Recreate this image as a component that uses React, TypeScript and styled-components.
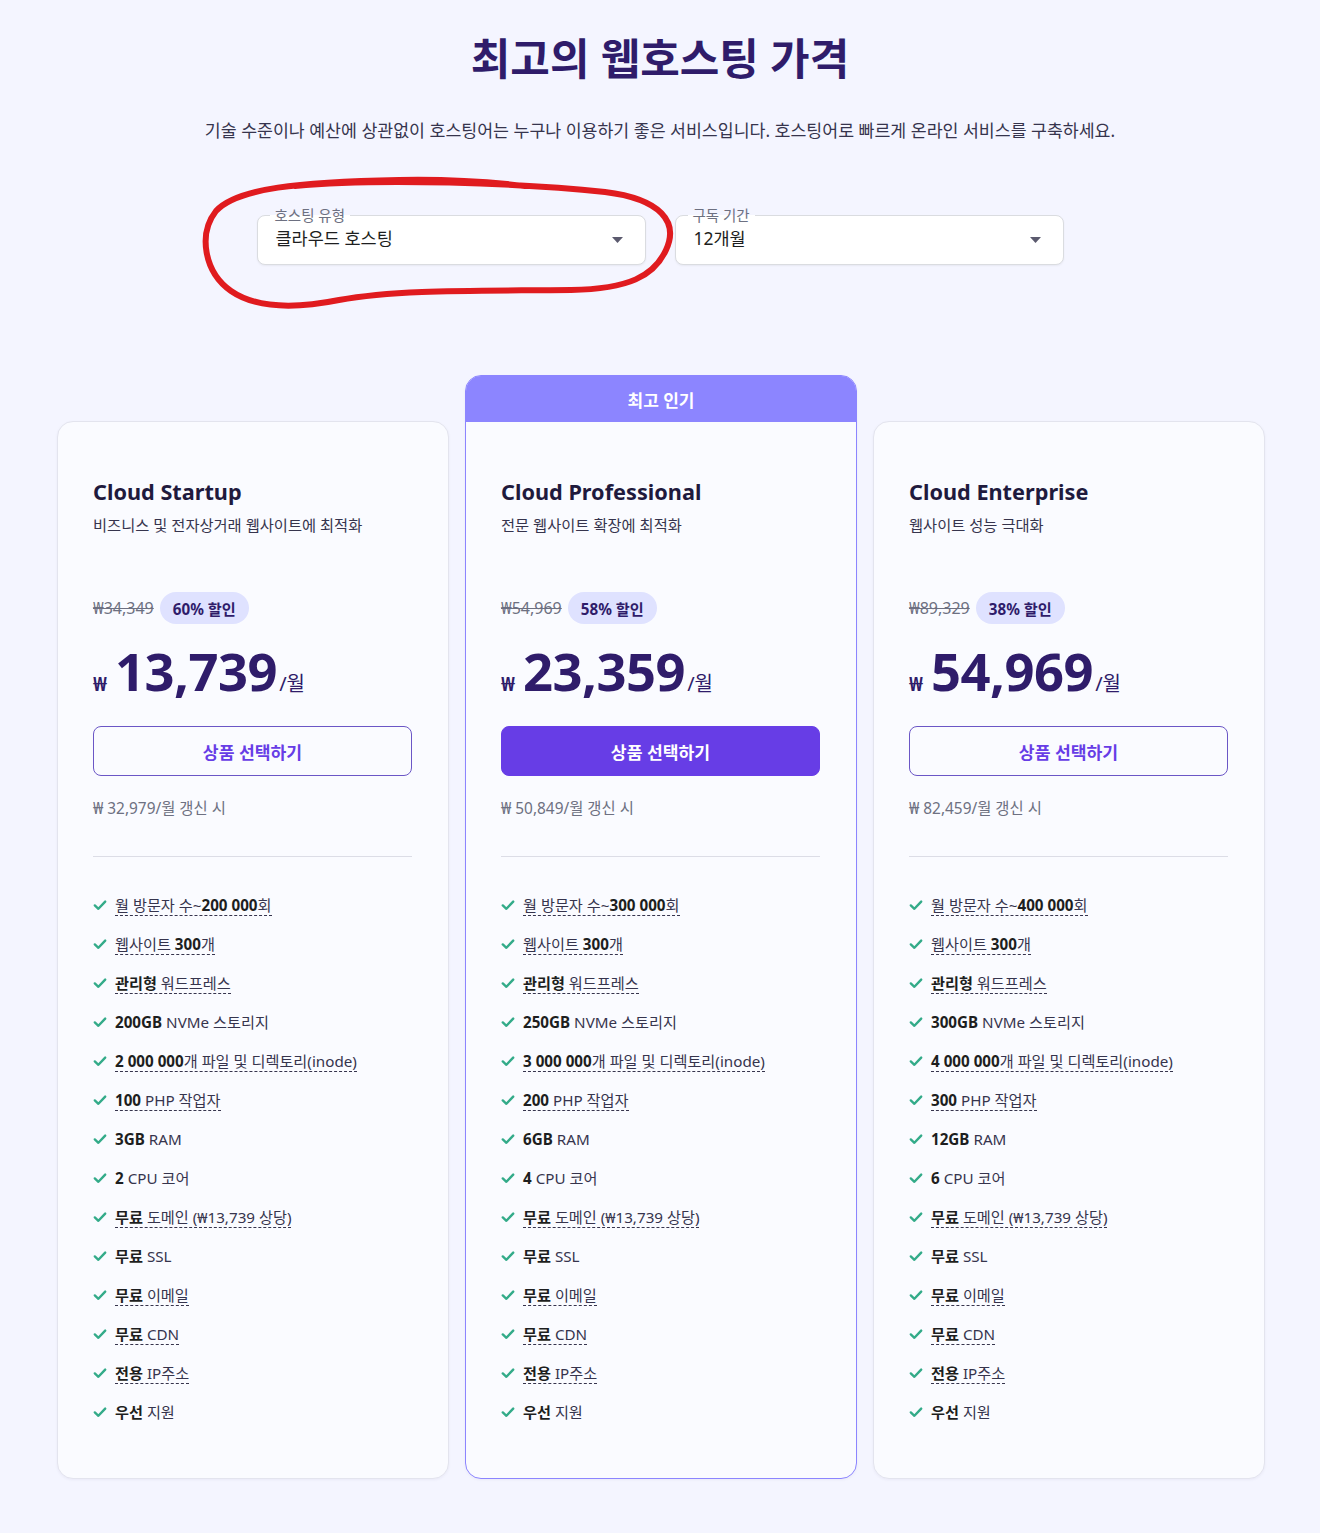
import React from "react";
import styled, { createGlobalStyle } from "styled-components";

type Feature = {
  pre?: string;
  bold: string;
  post?: string;
  dashed?: boolean;
};

type Plan = {
  name: string;
  desc: string;
  oldPrice: string;
  discount: string;
  price: string;
  renew: string;
  featured?: boolean;
  features: Feature[];
};

const makeFeatures = (
  visitors: string,
  storage: string,
  inodes: string,
  php: string,
  ram: string,
  cpu: string
): Feature[] => [
  { pre: "월 방문자 수~", bold: visitors, post: "회", dashed: true },
  { pre: "웹사이트 ", bold: "300", post: "개", dashed: true },
  { bold: "관리형", post: " 워드프레스", dashed: true },
  { bold: storage, post: " NVMe 스토리지" },
  { bold: inodes, post: "개 파일 및 디렉토리(inode)", dashed: true },
  { bold: php, post: " PHP 작업자", dashed: true },
  { bold: ram, post: " RAM" },
  { bold: cpu, post: " CPU 코어" },
  { bold: "무료", post: " 도메인 (₩13,739 상당)", dashed: true },
  { bold: "무료", post: " SSL" },
  { bold: "무료", post: " 이메일", dashed: true },
  { bold: "무료", post: " CDN", dashed: true },
  { bold: "전용", post: " IP주소", dashed: true },
  { bold: "우선", post: " 지원" },
];

const plans: Plan[] = [
  {
    name: "Cloud Startup",
    desc: "비즈니스 및 전자상거래 웹사이트에 최적화",
    oldPrice: "₩34,349",
    discount: "60% 할인",
    price: "13,739",
    renew: "₩ 32,979/월 갱신 시",
    features: makeFeatures("200 000", "200GB", "2 000 000", "100", "3GB", "2"),
  },
  {
    name: "Cloud Professional",
    desc: "전문 웹사이트 확장에 최적화",
    oldPrice: "₩54,969",
    discount: "58% 할인",
    price: "23,359",
    renew: "₩ 50,849/월 갱신 시",
    featured: true,
    features: makeFeatures("300 000", "250GB", "3 000 000", "200", "6GB", "4"),
  },
  {
    name: "Cloud Enterprise",
    desc: "웹사이트 성능 극대화",
    oldPrice: "₩89,329",
    discount: "38% 할인",
    price: "54,969",
    renew: "₩ 82,459/월 갱신 시",
    features: makeFeatures("400 000", "300GB", "4 000 000", "300", "12GB", "6"),
  },
];

const Caret = () => (
  <svg width="11" height="6" viewBox="0 0 11 6">
    <path d="M0 0 L11 0 L5.5 6 Z" fill="#5b5a6e" />
  </svg>
);

const Check = () => (
  <svg width="14" height="14" viewBox="0 0 14 14">
    <path
      d="M1.8 7.4 L5.4 10.8 L12.2 3.6"
      fill="none"
      stroke="#33ab89"
      strokeWidth="2.4"
      strokeLinecap="round"
      strokeLinejoin="round"
    />
  </svg>
);

export default function App() {
  return (
    <>
      <GlobalStyle />
      <Page>
        <Title>최고의 웹호스팅 가격</Title>
        <Subtitle>
          기술 수준이나 예산에 상관없이 호스팅어는 누구나 이용하기 좋은
          서비스입니다. 호스팅어로 빠르게 온라인 서비스를 구축하세요.
        </Subtitle>

        <Filters>
          <SelectBox>
            <FloatLabel>호스팅 유형</FloatLabel>
            <SelectValue>클라우드 호스팅</SelectValue>
            <Caret />
          </SelectBox>
          <SelectBox>
            <FloatLabel>구독 기간</FloatLabel>
            <SelectValue>12개월</SelectValue>
            <Caret />
          </SelectBox>
          <Annotation viewBox="198 175 500 150" width="500" height="150">
            <path
              d="M 296 186 C 380 178, 520 183, 606 192 C 662 199, 680 222, 667 250 C 655 276, 630 289, 572 290 C 480 291, 400 289, 340 300 C 300 308, 258 309, 232 291 C 205 272, 199 234, 217 211 C 238 188, 300 182, 400 180 C 452 179, 492 182, 526 186"
              fill="none"
              stroke="#e01b1f"
              strokeWidth="6"
              strokeLinecap="round"
              strokeLinejoin="round"
            />
          </Annotation>
        </Filters>

        <Plans>
          {plans.map((plan) => (
            <Card key={plan.name} $featured={plan.featured}>
              {plan.featured && <Ribbon>최고 인기</Ribbon>}
              <CardBody>
                <PlanName>{plan.name}</PlanName>
                <PlanDesc>{plan.desc}</PlanDesc>

                <DiscountRow>
                  <OldPrice>{plan.oldPrice}</OldPrice>
                  <Badge>{plan.discount}</Badge>
                </DiscountRow>

                <PriceRow>
                  <Currency>₩</Currency>
                  <Amount>{plan.price}</Amount>
                  <Per>/월</Per>
                </PriceRow>

                <SelectButton $primary={plan.featured}>상품 선택하기</SelectButton>
                <Renew>{plan.renew}</Renew>

                <Divider />

                <FeatureList>
                  {plan.features.map((f, i) => (
                    <FeatureItem key={i}>
                      <Check />
                      <FeatureText $dashed={f.dashed}>
                        {f.pre}
                        <b>{f.bold}</b>
                        {f.post}
                      </FeatureText>
                    </FeatureItem>
                  ))}
                </FeatureList>
              </CardBody>
            </Card>
          ))}
        </Plans>
      </Page>
    </>
  );
}

const GlobalStyle = createGlobalStyle`
  * {
    box-sizing: border-box;
  }

  body {
    margin: 0;
    background: #f4f5ff;
    font-family: "Noto Sans", "Noto Sans CJK KR", sans-serif;
    color: #36344d;
  }
`;

const Page = styled.div`
  display: flex;
  flex-direction: column;
  align-items: center;
  padding: 33px 0 55px;
`;

const Title = styled.h1`
  margin: 0;
  font-size: 43px;
  line-height: 52px;
  font-weight: 700;
  color: #2f1c6a;
`;

const Subtitle = styled.p`
  margin: 34px 0 0;
  font-size: 17.3px;
  line-height: 24px;
  color: #36344d;
`;

const Filters = styled.div`
  position: relative;
  display: flex;
  gap: 29px;
  margin-top: 72px;
`;

const SelectBox = styled.div`
  position: relative;
  width: 389px;
  height: 50px;
  display: flex;
  align-items: center;
  justify-content: space-between;
  padding: 0 22px 0 18px;
  background: #fff;
  border: 1px solid #dadce0;
  border-radius: 8px;
  box-shadow: 0 1px 2px rgba(29, 30, 32, 0.06);
`;

const FloatLabel = styled.span`
  position: absolute;
  top: -10px;
  left: 12px;
  padding: 0 5px;
  font-size: 14.5px;
  line-height: 18px;
  color: #6d7081;
  background: linear-gradient(to bottom, #f4f5ff 50%, #fff 50%);
`;

const SelectValue = styled.span`
  font-size: 17.5px;
  line-height: 24px;
  color: #1d1e20;
  margin-top: -4px;
`;

const Annotation = styled.svg`
  position: absolute;
  left: -60px;
  top: -40px;
  pointer-events: none;
`;

const Plans = styled.div`
  display: grid;
  grid-template-columns: repeat(3, 392px);
  gap: 16px;
  align-items: end;
  margin-top: 110px;
  margin-left: 2px;
`;

const Card = styled.div<{ $featured?: boolean }>`
  display: flex;
  flex-direction: column;
  background: #fafbff;
  border: ${(p) => (p.$featured ? "1.5px solid #8c85ff" : "1px solid #e3e4ee")};
  border-radius: 16px;
  overflow: hidden;
  box-shadow: 0 1px 3px rgba(47, 28, 106, 0.05);
`;

const Ribbon = styled.div`
  height: 46px;
  display: flex;
  align-items: center;
  justify-content: center;
  background: #8c85ff;
  color: #fff;
  font-size: 17px;
  font-weight: 700;
`;

const CardBody = styled.div`
  display: flex;
  flex-direction: column;
  padding: 55px 36px 54px 35px;
`;

const PlanName = styled.h2`
  margin: 0;
  font-size: 21.7px;
  line-height: 30px;
  font-weight: 700;
  color: #1f1a3d;
`;

const PlanDesc = styled.p`
  margin: 7px 0 0;
  font-size: 15.3px;
  line-height: 22px;
  color: #36344d;
`;

const DiscountRow = styled.div`
  display: flex;
  align-items: center;
  gap: 6px;
  margin-top: 56px;
`;

const OldPrice = styled.span`
  font-size: 16px;
  line-height: 20px;
  color: #6d7081;
  text-decoration: line-through;
`;

const Badge = styled.span`
  height: 32px;
  display: inline-flex;
  align-items: center;
  padding: 0 13px;
  border-radius: 16px;
  background: #dfe2ff;
  color: #2f1c6a;
  font-size: 15.2px;
  font-weight: 700;
`;

const PriceRow = styled.div`
  display: flex;
  align-items: baseline;
  margin-top: 16px;
  height: 62px;
  color: #2f1c6a;
`;

const Currency = styled.span`
  font-size: 19px;
  font-weight: 700;
  margin-right: 8px;
`;

const Amount = styled.span`
  font-size: 52.5px;
  line-height: 62px;
  font-weight: 700;
  letter-spacing: -0.5px;
`;

const Per = styled.span`
  font-size: 20px;
  margin-left: 2px;
`;

const SelectButton = styled.button<{ $primary?: boolean }>`
  margin-top: 24px;
  height: 50px;
  width: 100%;
  border-radius: 8px;
  border: 1.5px solid ${(p) => (p.$primary ? "#673de6" : "#6b56c6")};
  background: ${(p) => (p.$primary ? "#673de6" : "transparent")};
  color: ${(p) => (p.$primary ? "#fff" : "#673de6")};
  font-family: inherit;
  font-size: 17.2px;
  font-weight: 700;
  cursor: pointer;
`;

const Renew = styled.p`
  margin: 22px 0 0;
  font-size: 15.4px;
  line-height: 22px;
  color: #6d7081;
`;

const Divider = styled.hr`
  margin: 36px 0 0;
  border: none;
  border-top: 1px solid #dcdde6;
  width: 100%;
`;

const FeatureList = styled.ul`
  list-style: none;
  margin: 36px 0 0;
  padding: 0;
  display: flex;
  flex-direction: column;
  gap: 15px;
`;

const FeatureItem = styled.li`
  display: flex;
  align-items: center;
  gap: 8px;
  height: 24px;
  font-size: 15.2px;
  color: #36344d;
`;

const FeatureText = styled.span<{ $dashed?: boolean }>`
  line-height: 20px;
  border-bottom: ${(p) => (p.$dashed ? "1px dashed #36344d" : "1px solid transparent")};

  b {
    font-weight: 700;
    color: #1d1e20;
  }
`;
